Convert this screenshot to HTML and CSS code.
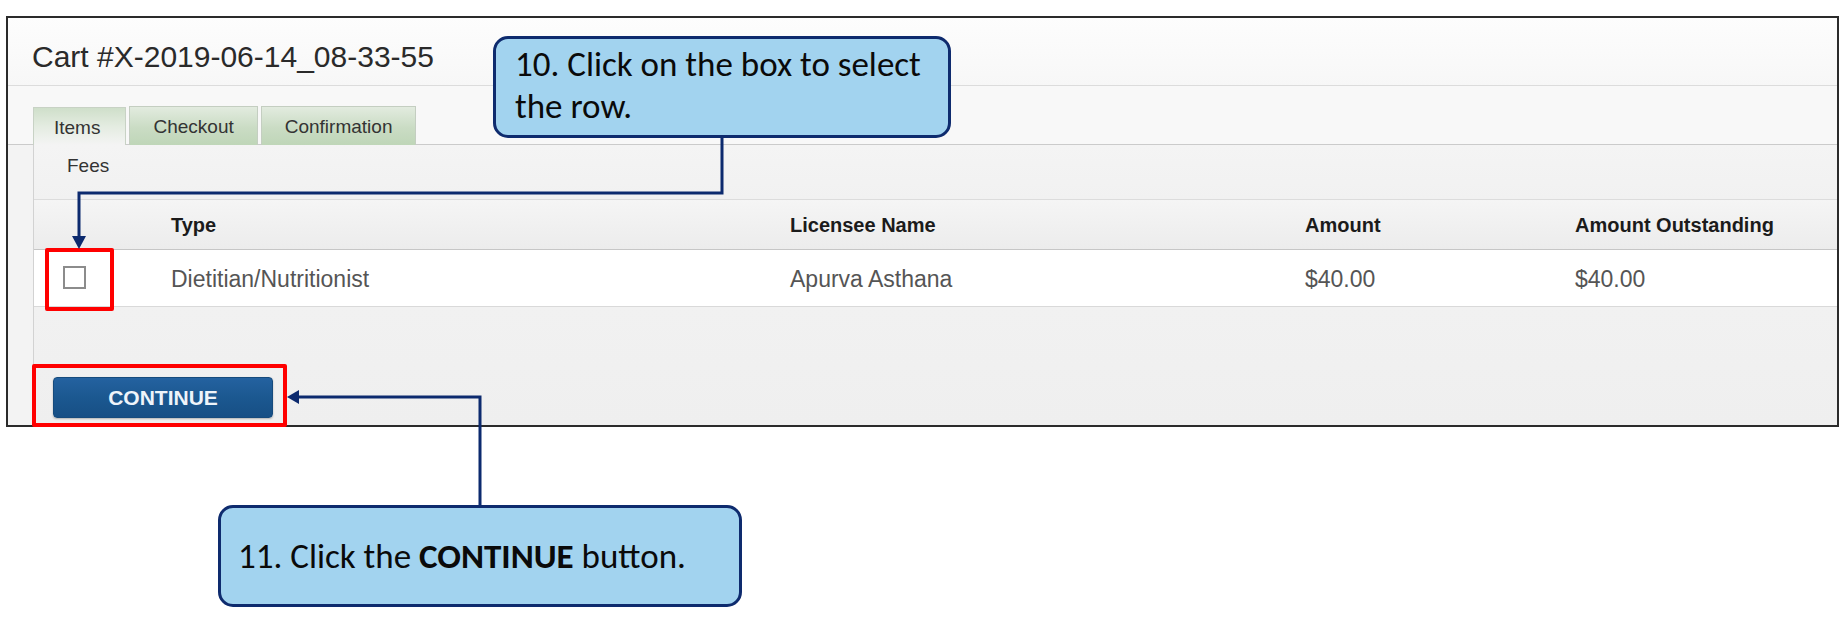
FILE: index.html
```html
<!DOCTYPE html>
<html lang="en">
<head>
<meta charset="utf-8">
<title>Cart</title>
<link rel="stylesheet" href="styles.css">
</head>
<body>
<div class="shot">
  <div class="titlebar"><h1 class="cart-title">Cart #X-2019-06-14_08-33-55</h1></div>
  <div class="tabstrip">
    <div class="tab tab-active">Items</div>
    <div class="tab">Checkout</div>
    <div class="tab">Confirmation</div>
  </div>
  <div class="panel">
    <div class="section-label">Fees</div>
    <div class="fees-grid fees-head">
      <div class="cell"></div>
      <div class="cell">Type</div>
      <div class="cell">Licensee Name</div>
      <div class="cell">Amount</div>
      <div class="cell">Amount Outstanding</div>
    </div>
    <div class="fees-grid fees-row">
      <div class="cell cell-check"><span class="checkbox"></span></div>
      <div class="cell">Dietitian/Nutritionist</div>
      <div class="cell">Apurva Asthana</div>
      <div class="cell">$40.00</div>
      <div class="cell">$40.00</div>
    </div>
    <div class="actions"><button class="btn-continue" type="button">CONTINUE</button></div>
  </div>
</div>

<div class="highlight highlight-check"></div>
<div class="highlight highlight-button"></div>

<svg class="connectors" width="1848" height="632" viewBox="0 0 1848 632">
  <path d="M722 137 V193 H79 V237" fill="none" stroke="#0c2a6e" stroke-width="3"/>
  <polygon points="72,236 86,236 79,249" fill="#0c2a6e"/>
  <path d="M480 506 V397 H298" fill="none" stroke="#0c2a6e" stroke-width="3"/>
  <polygon points="299,390 299,404 287,397" fill="#0c2a6e"/>
</svg>

<div class="callout callout-one">10. Click on the box to select<br>the row.</div>
<div class="callout callout-two"><span>11. Click the <b>CONTINUE</b> button.</span></div>
</body>
</html>
```

FILE: styles.css
```css
* { box-sizing: border-box; }

html, body {
  margin: 0;
  padding: 0;
  background: #ffffff;
  width: 1848px;
  height: 632px;
  overflow: hidden;
  font-family: "Liberation Sans", Arial, sans-serif;
}

body {
  position: relative;
  padding: 16px 0 0 6px;
}

.shot {
  width: 1833px;
  height: 411px;
  border: 2px solid #2b2b2b;
  background: #f3f3f3;
  display: flex;
  flex-direction: column;
  overflow: hidden;
}

.titlebar {
  height: 68px;
  padding: 21px 0 0 24px;
  border-bottom: 1px solid #dcdcdc;
  background: linear-gradient(#fdfdfd, #f7f7f7);
  flex: none;
}

.cart-title {
  margin: 0;
  font-weight: normal;
  font-size: 30px;
  line-height: 35px;
  color: #2a2a2a;
}

.tabstrip {
  height: 59px;
  flex: none;
  display: flex;
  align-items: flex-end;
  gap: 3px;
  padding-left: 25px;
  border-bottom: 1px solid #cbcbcb;
  background: #f8f8f8;
}

.tab {
  height: 39px;
  margin-bottom: -1px;
  padding: 9px 23px 0;
  font-size: 19px;
  line-height: 22px;
  color: #333;
  border: 1px solid #c4cec1;
  border-bottom: none;
  background: linear-gradient(#e2ebdf 0%, #cadcc4 55%, #bfd6b8 100%);
}

.tab-active {
  height: 38px;
  padding-top: 9px;
  padding-left: 20px;
  padding-right: 25px;
  background: linear-gradient(#cfdfca 0%, #e4ece1 50%, #f4f4f4 100%);
  border-color: #c8d2c5;
}

.panel {
  flex: 1;
  margin-left: 25px;
  border-left: 1px solid #d2d2d2;
  background: #f2f2f2;
  display: flex;
  flex-direction: column;
}

.section-label {
  height: 54px;
  padding: 10px 0 0 33px;
  font-size: 19px;
  line-height: 22px;
  color: #333;
  background: linear-gradient(#f4f4f4, #f1f1f1);
  flex: none;
}

.fees-grid {
  display: grid;
  grid-template-columns: 137px 619px 515px 270px 1fr;
  flex: none;
}

.fees-head {
  height: 51px;
  border-top: 1px solid #dcdcdc;
  border-bottom: 1px solid #c6c6c6;
  background: linear-gradient(#f5f5f5, #ececec);
  font-weight: bold;
  font-size: 20px;
  line-height: 24px;
  color: #1b1b1b;
}

.fees-head .cell {
  padding-top: 13px;
}

.fees-row {
  height: 57px;
  border-bottom: 1px solid #d9d9d9;
  background: #ffffff;
  font-size: 23px;
  line-height: 26px;
  color: #555555;
}

.fees-row .cell {
  padding-top: 16px;
}

.cell-check {
  padding-left: 29px;
}

.checkbox {
  display: block;
  width: 23px;
  height: 23px;
  border: 2px solid #8c8c8c;
  background: #fff;
}

.actions {
  flex: 1;
  padding: 70px 0 0 19px;
  background: linear-gradient(#f1f1f1, #efefef);
}

.btn-continue {
  display: block;
  width: 220px;
  height: 41px;
  padding: 0;
  border: 1px solid #164b7d;
  border-radius: 4px;
  background: linear-gradient(#2462a0, #1b5890 50%, #174f85);
  color: #eef4fa;
  font-family: "Liberation Sans", Arial, sans-serif;
  font-weight: bold;
  font-size: 21px;
  line-height: 39px;
  text-align: center;
  box-shadow: 0 1px 2px rgba(0, 0, 0, 0.25);
}

/* annotation overlay */
.highlight {
  position: absolute;
  border: 4px solid #ff0000;
  border-radius: 2px;
}

.highlight-check {
  left: 45px;
  top: 248px;
  width: 69px;
  height: 63px;
}

.highlight-button {
  left: 32px;
  top: 364px;
  width: 255px;
  height: 63px;
}

.connectors {
  position: absolute;
  left: 0;
  top: 0;
}

.callout {
  position: absolute;
  border: 3px solid #0e2b6e;
  border-radius: 15px;
  background: #a2d3ef;
  color: #0a0a0a;
  font-family: Carlito, Lato, "Open Sans", sans-serif;
  font-size: 35px;
  line-height: 42px;
  white-space: nowrap;
}

.callout-one {
  left: 493px;
  top: 36px;
  width: 458px;
  height: 102px;
  padding: 4px 0 0 19px;
}

.callout-two {
  left: 218px;
  top: 505px;
  width: 524px;
  height: 102px;
  padding-left: 17px;
  display: flex;
  align-items: center;
}
```
